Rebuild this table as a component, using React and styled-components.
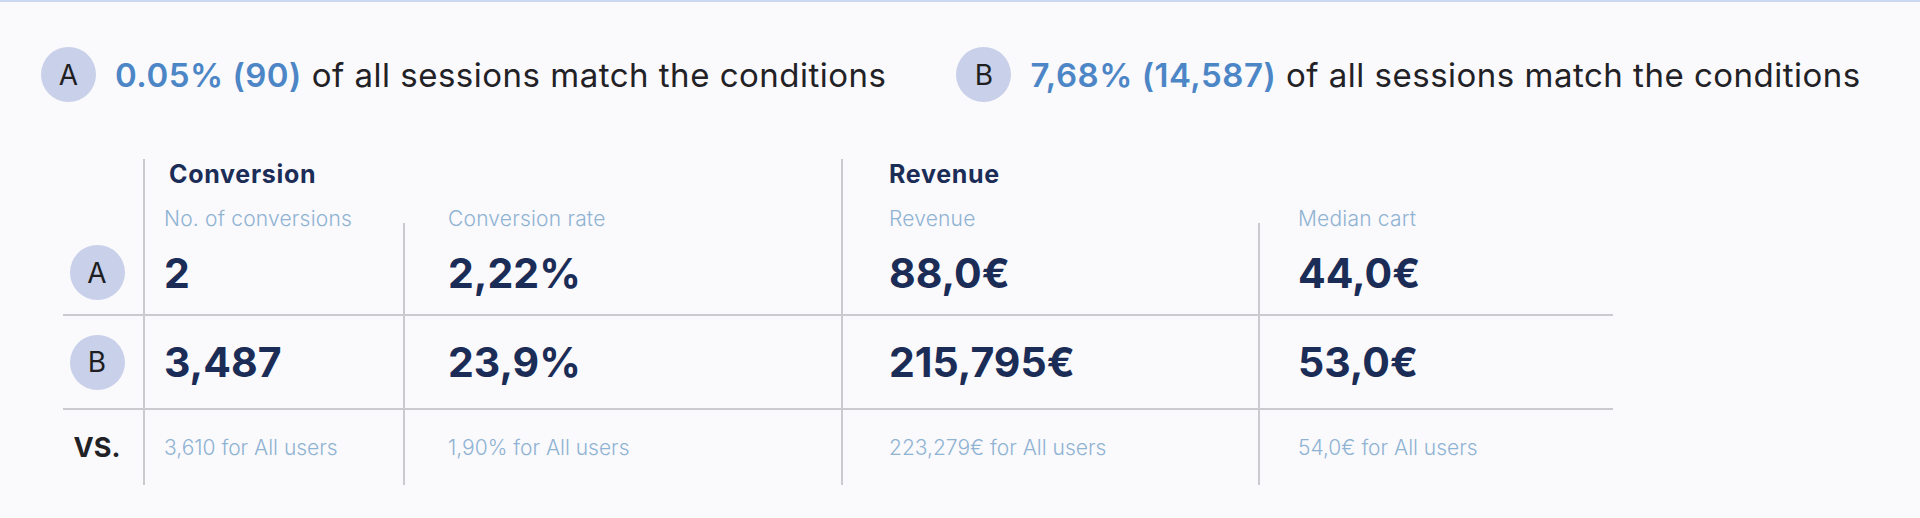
import React from 'react';
import styled, { createGlobalStyle } from 'styled-components';

const GlobalStyle = createGlobalStyle`
  html, body {
    margin: 0;
    padding: 0;
    background: #faf9fc;
  }
  body {
    font-family: Inter, "Liberation Sans", sans-serif;
    -webkit-font-smoothing: antialiased;
  }
`;

const Page = styled.div`
  min-height: 518px;
  border-top: 2px solid #c9d9ef;
  box-sizing: border-box;
`;

const Summary = styled.div`
  display: flex;
  align-items: center;
  gap: 70px;
  padding: 45px 0 0 41px;
`;

const SummaryItem = styled.div`
  display: flex;
  align-items: center;
  gap: 19px;
`;

const Badge = styled.div`
  width: 55px;
  height: 55px;
  flex: 0 0 55px;
  border-radius: 50%;
  background: #c8d0ea;
  color: #1f1f22;
  font-size: 28px;
  font-weight: 400;
  display: flex;
  align-items: center;
  justify-content: center;
`;

const SummaryText = styled.div`
  font-size: 33px;
  letter-spacing: 0.5px;
  color: #222226;
  white-space: nowrap;
`;

const Share = styled.span`
  color: #4c86c6;
  font-weight: 600;
`;

const Table = styled.div`
  margin: 57px 0 0 63px;
  width: 1550px;
`;

const Row = styled.div`
  display: grid;
  grid-template-columns: 80px 260px 438px 417px 355px;
  height: ${(p) => p.$height}px;
  border-bottom: ${(p) => (p.$ruled ? '2px solid #cbcbcf' : 'none')};
`;

const LabelCell = styled.div`
  display: flex;
  align-items: center;
  justify-content: center;
  padding-right: 12px;
`;

const Cell = styled.div`
  box-sizing: border-box;
  display: flex;
  align-items: ${(p) => p.$align || 'center'};
  padding-left: ${(p) => p.$pad}px;
  border-left: ${(p) => (p.$line ? '2px solid #cbcbcf' : 'none')};
  grid-column: ${(p) => (p.$span ? `span ${p.$span}` : 'auto')};
  background: ${(p) =>
    p.$lineFrom
      ? `linear-gradient(#cbcbcf, #cbcbcf) left ${p.$lineFrom}px / 2px calc(100% - ${p.$lineFrom}px) no-repeat`
      : 'none'};
`;

const GroupTitle = styled.div`
  font-size: 25px;
  font-weight: 700;
  letter-spacing: 0.7px;
  color: #1b2d57;
  line-height: 30px;
`;

const MetricLabel = styled.div`
  font-size: 21px;
  font-weight: 300;
  letter-spacing: 0.2px;
  color: #8fb3d3;
  line-height: 24px;
  padding-top: 18px;
`;

const Value = styled.div`
  font-size: 41px;
  font-weight: 700;
  color: #1b2d57;
`;

const Baseline = styled.div`
  font-size: 21px;
  font-weight: 300;
  color: #8fb3d3;
`;

const Versus = styled.div`
  font-size: 27px;
  font-weight: 700;
  color: #222226;
`;

const columns = [
  { key: 'conversions', label: 'No. of conversions', pad: 19, line: 'full' },
  { key: 'rate', label: 'Conversion rate', pad: 43, line: 'sub' },
  { key: 'revenue', label: 'Revenue', pad: 46, line: 'full' },
  { key: 'cart', label: 'Median cart', pad: 38, line: 'sub' },
];

const rows = [
  { id: 'A', height: 81, values: ['2', '2,22%', '88,0€', '44,0€'] },
  { id: 'B', height: 90, values: ['3,487', '23,9%', '215,795€', '53,0€'] },
];

const allUsers = ['3,610', '1,90%', '223,279€', '54,0€'];

const App = () => {
  return (
    <Page>
      <GlobalStyle />
      <Summary>
        <SummaryItem>
          <Badge>A</Badge>
          <SummaryText>
            <Share>0.05% (90)</Share> of all sessions match the conditions
          </SummaryText>
        </SummaryItem>
        <SummaryItem>
          <Badge>B</Badge>
          <SummaryText>
            <Share>7,68% (14,587)</Share> of all sessions match the conditions
          </SummaryText>
        </SummaryItem>
      </Summary>

      <Table>
        <Row $height={30}>
          <LabelCell />
          <Cell $span={2} $pad={24} $line $align="center">
            <GroupTitle>Conversion</GroupTitle>
          </Cell>
          <Cell $span={2} $pad={46} $line $align="center">
            <GroupTitle>Revenue</GroupTitle>
          </Cell>
        </Row>

        <Row $height={42}>
          <LabelCell />
          {columns.map((c) => (
            <Cell
              key={c.key}
              $pad={c.line === 'full' ? c.pad : c.pad + 2}
              $line={c.line === 'full'}
              $lineFrom={c.line === 'sub' ? 34 : 0}
              $align="flex-start"
            >
              <MetricLabel>{c.label}</MetricLabel>
            </Cell>
          ))}
        </Row>

        {rows.map((r) => (
          <Row key={r.id} $height={r.height + 2} $ruled>
            <LabelCell>
              <Badge>{r.id}</Badge>
            </LabelCell>
            {columns.map((c, i) => (
              <Cell key={c.key} $pad={c.pad} $line>
                <Value>{r.values[i]}</Value>
              </Cell>
            ))}
          </Row>
        ))}

        <Row $height={75}>
          <LabelCell>
            <Versus>VS.</Versus>
          </LabelCell>
          {columns.map((c, i) => (
            <Cell key={c.key} $pad={c.pad} $line>
              <Baseline>{allUsers[i]} for All users</Baseline>
            </Cell>
          ))}
        </Row>
      </Table>
    </Page>
  );
};

export default App;
